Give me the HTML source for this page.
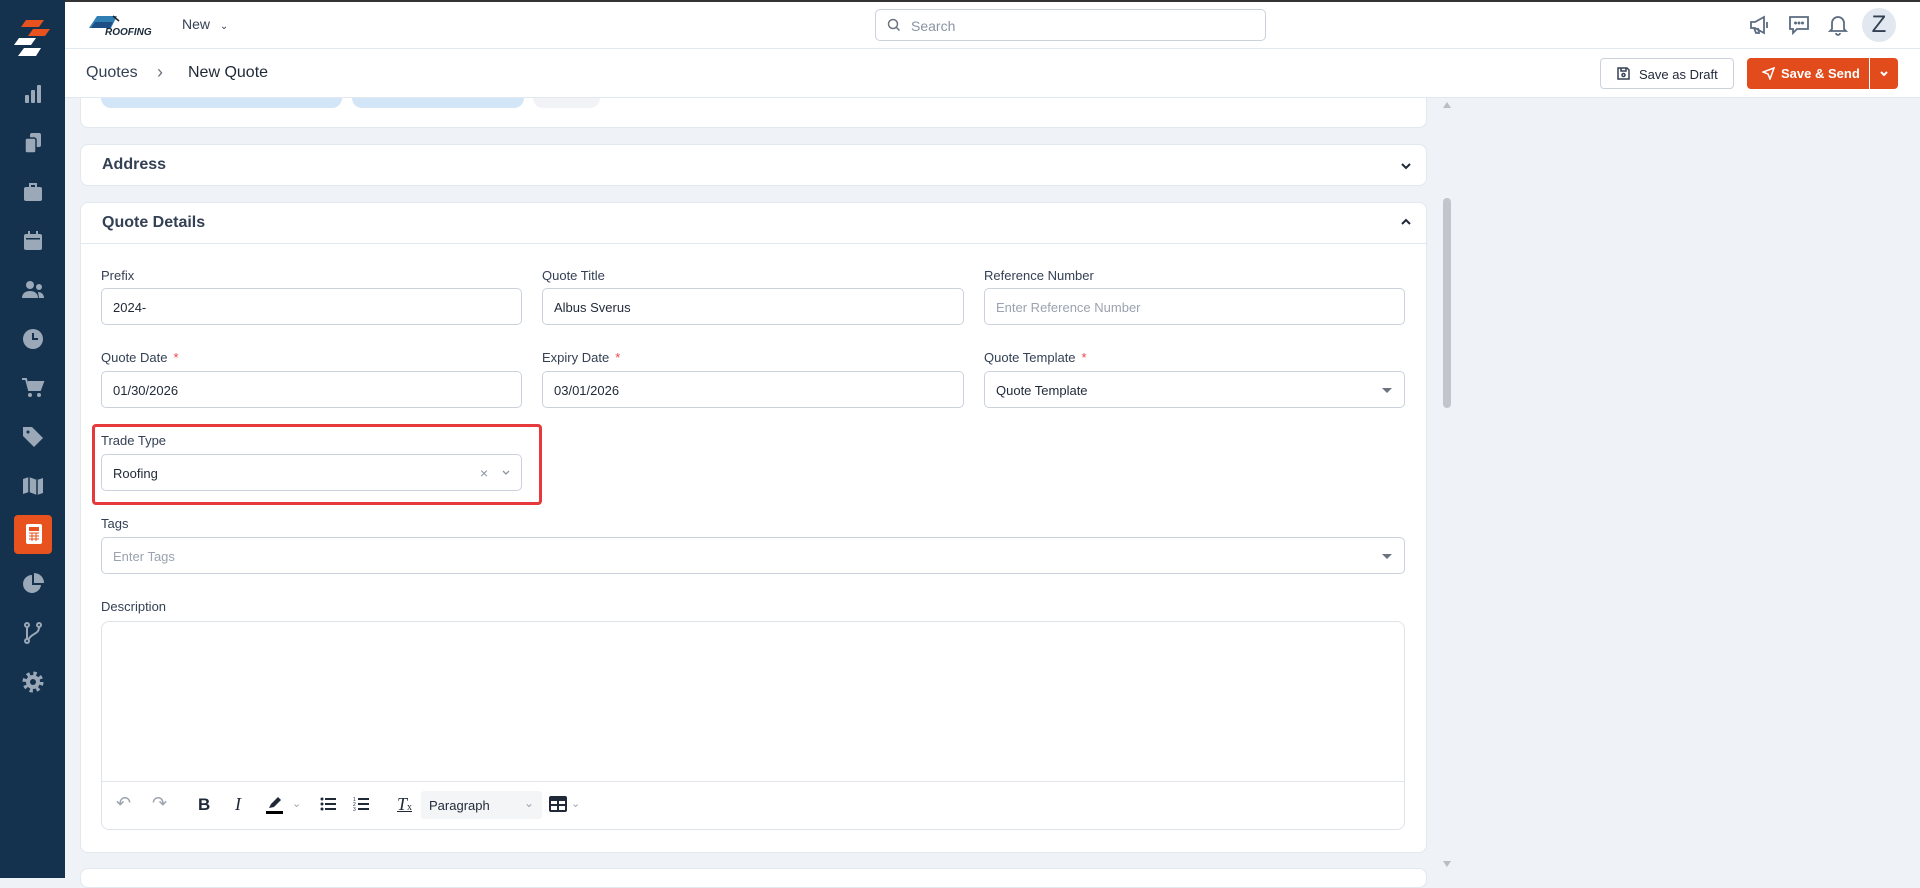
<!DOCTYPE html>
<html><head><meta charset="utf-8"><style>
*{box-sizing:border-box;margin:0;padding:0}
body{width:1920px;height:878px;overflow:hidden;background:#eff2f7;font-family:"Liberation Sans",sans-serif;color:#344054;position:relative}
.abs{position:absolute}
#side{left:0;top:0;width:65px;height:878px;background:#14324d;z-index:5}
#top{left:65px;top:0;width:1855px;height:49px;background:#fff;border-bottom:1px solid #e2e8f0;border-top:2px solid #333;z-index:5}
#bc{left:65px;top:49px;width:1855px;height:49px;background:#fff;border-bottom:1px solid #e2e8f0;z-index:5}
.card{position:absolute;left:80px;width:1347px;background:#fff;border:1px solid #e2e8f0;border-radius:8px}
.lbl{position:absolute;font-size:13px;color:#344054}
.lbl b{color:#ef4444;font-weight:normal;margin-left:6px}
.inp{position:absolute;height:37px;border:1px solid #cbd2dc;border-radius:5px;font-size:13px;padding:11px 11px;color:#1f2937;background:#fff}
.ph{color:#9aa3b0}
.si{position:absolute;left:21px;width:24px;height:24px}
.car{position:absolute;right:12px;top:16px;width:0;height:0;border-left:5px solid transparent;border-right:5px solid transparent;border-top:5px solid #6b7280}
</style></head><body>
<div id="side" class="abs">
<svg class="abs" style="left:14px;top:20px" width="36" height="38" viewBox="0 0 36 38"><path d="M12 0h18l-5 7H7z" fill="#e8521e"/><path d="M19 9h17l-5 7H14z" fill="#e8521e"/><path d="M5 18h17l-5 7H0z" fill="#fff"/><path d="M10 28h17l-5 8H4z" fill="#fff"/></svg>
<svg class="si" style="top:82px" viewBox="0 0 24 24" fill="#9aa8b8"><rect x="4" y="13" width="4" height="8" rx="1"/><rect x="10" y="8" width="4" height="13" rx="1"/><rect x="16" y="3" width="4" height="18" rx="1"/></svg>
<svg class="si" style="top:131px" viewBox="0 0 24 24" fill="#9aa8b8"><rect x="9" y="2" width="11" height="14" rx="2"/><rect x="4" y="7" width="11" height="15" rx="2" stroke="#14324d" stroke-width="1.5"/></svg>
<svg class="si" style="top:180px" viewBox="0 0 24 24" fill="#9aa8b8"><rect x="3" y="7" width="18" height="14" rx="2"/><path d="M9 7V4h6v3" stroke="#9aa8b8" stroke-width="2" fill="none"/></svg>
<svg class="si" style="top:229px" viewBox="0 0 24 24" fill="#9aa8b8"><rect x="3" y="5" width="18" height="16" rx="2"/><rect x="7" y="2" width="2" height="4"/><rect x="15" y="2" width="2" height="4"/><rect x="5" y="9" width="14" height="1.5" fill="#14324d"/></svg>
<svg class="si" style="top:278px" viewBox="0 0 24 24" fill="#9aa8b8"><circle cx="9" cy="7" r="4"/><path d="M1 20c0-5 4-7 8-7s8 2 8 7z"/><circle cx="18" cy="9" r="3"/><path d="M17 14c3 0 6 2 6 6h-5z"/></svg>
<svg class="si" style="top:327px" viewBox="0 0 24 24"><circle cx="12" cy="12" r="10" fill="#9aa8b8"/><path d="M12 6v6h5" stroke="#14324d" stroke-width="2" fill="none"/></svg>
<svg class="si" style="top:376px" viewBox="0 0 24 24" fill="#9aa8b8"><path d="M1 3h4l3 11h11l3-8H7" stroke="#9aa8b8" stroke-width="2" fill="none"/><path d="M7 6h15l-3 8H8z"/><circle cx="9" cy="19" r="2"/><circle cx="18" cy="19" r="2"/></svg>
<svg class="si" style="top:425px" viewBox="0 0 24 24" fill="#9aa8b8"><path d="M2 4V2h9l11 11-9 9L2 11z"/><circle cx="7" cy="7" r="1.5" fill="#14324d"/></svg>
<svg class="si" style="top:474px" viewBox="0 0 24 24" fill="#9aa8b8"><path d="M2 5l6-2 8 3 6-2v15l-6 2-8-3-6 2z"/><path d="M8 3v16M16 6v16" stroke="#14324d" stroke-width="1.5"/></svg>
<div class="abs" style="left:14px;top:515px;width:38px;height:39px;background:#e8521e;border-radius:4px"></div>
<svg class="si" style="top:522px;left:22px" viewBox="0 0 24 24"><rect x="4" y="2" width="16" height="20" rx="2" fill="#fff"/><rect x="7" y="5" width="10" height="4" fill="#e8521e"/><path d="M7 11h10M7 14h10M7 17h10M10 11v8M14 11v8" stroke="#e8521e" stroke-width="1"/></svg>
<svg class="si" style="top:572px" viewBox="0 0 24 24" fill="#9aa8b8"><path d="M11 3a9 9 0 1 0 9 10h-9z"/><path d="M13 1v10h10A10 10 0 0 0 13 1z"/></svg>
<svg class="si" style="top:621px" viewBox="0 0 24 24" fill="none" stroke="#9aa8b8" stroke-width="2"><circle cx="6" cy="4" r="2"/><circle cx="6" cy="20" r="2"/><circle cx="18" cy="4" r="2"/><path d="M6 6v12M18 6c0 8-8 6-10 12"/></svg>
<svg class="si" style="top:670px" viewBox="0 0 24 24"><circle cx="12" cy="12" r="8" fill="none" stroke="#9aa8b8" stroke-width="5" stroke-dasharray="3 3.3"/><circle cx="12" cy="12" r="7" fill="#9aa8b8"/><circle cx="12" cy="12" r="3" fill="#14324d"/></svg>
</div>
<div id="top" class="abs">
<svg class="abs" style="left:22px;top:12px" width="72" height="22" viewBox="0 0 72 22"><path d="M10 2h20l-6 12H2z" fill="#2f7fb5"/><path d="M8 8h18l-3 6H4z" fill="#1e4f84"/><path d="M26 2l6 5" stroke="#222" stroke-width="1.5"/><text x="18" y="21" font-size="10" font-style="italic" font-weight="bold" fill="#1a2a3a" font-family="Liberation Sans">ROOFING</text></svg>
<div class="abs" style="left:117px;top:14px;font-size:14px;color:#344054">New <span style="font-size:10px;margin-left:6px">&#8964;</span></div>
<div class="abs" style="left:810px;top:7px;width:391px;height:32px;border:1px solid #cbd2dc;border-radius:5px;background:#fff">
<svg class="abs" style="left:11px;top:8px" width="14" height="14" viewBox="0 0 14 14" fill="none" stroke="#6b7280" stroke-width="1.5"><circle cx="6" cy="6" r="4.5"/><path d="M9.5 9.5l3 3"/></svg>
<span class="abs" style="left:35px;top:8px;font-size:14px;color:#8a94a3">Search</span></div>
<svg class="abs" style="left:1684px;top:13px" width="22" height="20" viewBox="0 0 22 20" fill="none" stroke="#5b6b80" stroke-width="1.8"><path d="M2 7h4l9-5v16l-9-5H2z"/><path d="M5 13l2 5h3l-1-5"/><path d="M18 7v6"/></svg>
<svg class="abs" style="left:1723px;top:13px" width="22" height="20" viewBox="0 0 22 20" fill="none" stroke="#5b6b80" stroke-width="1.8"><path d="M2 2h18v12H9l-4 4v-4H2z"/><circle cx="7.5" cy="8" r=".6" fill="#5b6b80"/><circle cx="11" cy="8" r=".6" fill="#5b6b80"/><circle cx="14.5" cy="8" r=".6" fill="#5b6b80"/></svg>
<svg class="abs" style="left:1763px;top:12px" width="20" height="22" viewBox="0 0 20 22" fill="none" stroke="#5b6b80" stroke-width="1.8"><path d="M4 15V9a6 6 0 0 1 12 0v6l2 2H2z"/><path d="M8 19a2 2 0 0 0 4 0"/></svg>
<div class="abs" style="left:1797px;top:6px;width:34px;height:34px;border-radius:50%;background:#e2e8f0;font-size:24px;color:#344054;text-align:center;line-height:34px">Z</div>
</div>
<div id="bc" class="abs">
<span class="abs" style="left:21px;top:15px;font-size:16px;color:#344054">Quotes</span>
<span class="abs" style="left:92px;top:13px;font-size:18px;color:#6b7280">&#8250;</span>
<span class="abs" style="left:123px;top:15px;font-size:16px;color:#1f2937">New Quote</span>
<div class="abs" style="left:1535px;top:9px;width:134px;height:31px;border:1px solid #cbd2dc;border-radius:4px;background:#fff;font-size:13px;color:#1f2937;padding:8px 0 0 38px">Save as Draft
<svg class="abs" style="left:16px;top:8px" width="13" height="13" viewBox="0 0 13 13" fill="none" stroke="#344054" stroke-width="1.5"><path d="M1 1h9l2 2v9H1z"/><circle cx="6.5" cy="8" r="1.5"/><path d="M4 1v3h5V1"/></svg></div>
<div class="abs" style="left:1682px;top:9px;width:151px;height:31px;border-radius:4px;background:#e24c1d;font-size:13px;color:#fff;font-weight:bold;padding:8px 0 0 34px">Save &amp; Send
<svg class="abs" style="left:15px;top:9px" width="13" height="13" viewBox="0 0 13 13" fill="none" stroke="#fff" stroke-width="1.5"><path d="M12 1L1 5l5 2 2 5z"/></svg>
<div class="abs" style="left:122px;top:0;width:1px;height:31px;background:#fff"></div>
<svg class="abs" style="left:132px;top:12px" width="10" height="8" viewBox="0 0 10 8" fill="none" stroke="#fff" stroke-width="2"><path d="M2 2l3 3 3-3"/></svg></div>
</div>
<div class="card" style="top:70px;height:58px;border-top:none;border-radius:0 0 8px 8px"></div>
<div class="abs" style="left:101px;top:98px;width:241px;height:10px;background:#d2e6f8;border-radius:0 0 12px 12px"></div>
<div class="abs" style="left:352px;top:98px;width:172px;height:10px;background:#d2e6f8;border-radius:0 0 12px 12px"></div>
<div class="abs" style="left:533px;top:98px;width:67px;height:10px;background:#f1f3f6;border-radius:0 0 12px 12px"></div>
<div class="card" style="top:144px;height:42px"><span class="abs" style="left:21px;top:11px;font-size:16px;font-weight:bold;color:#344054">Address</span>
<svg class="abs" style="right:14px;top:17px" width="12" height="8" viewBox="0 0 12 8" fill="none" stroke="#1f2937" stroke-width="2"><path d="M2 2l4 4 4-4"/></svg></div>
<div class="card" style="top:202px;height:651px">
<div class="abs" style="left:0;top:40px;width:100%;height:1px;background:#e2e8f0"></div>
<span class="abs" style="left:21px;top:11px;font-size:16px;font-weight:bold;color:#344054">Quote Details</span>
<svg class="abs" style="right:14px;top:15px" width="12" height="8" viewBox="0 0 12 8" fill="none" stroke="#1f2937" stroke-width="2"><path d="M2 6l4-4 4 4"/></svg>
</div>
<div class="lbl" style="left:101px;top:268px">Prefix</div>
<div class="inp" style="left:101px;top:288px;width:421px">2024-</div>
<div class="lbl" style="left:542px;top:268px">Quote Title</div>
<div class="inp" style="left:542px;top:288px;width:422px">Albus Sverus</div>
<div class="lbl" style="left:984px;top:268px">Reference Number</div>
<div class="inp ph" style="left:984px;top:288px;width:421px">Enter Reference Number</div>
<div class="lbl" style="left:101px;top:350px">Quote Date<b>*</b></div>
<div class="inp" style="left:101px;top:371px;width:421px">01/30/2026</div>
<div class="lbl" style="left:542px;top:350px">Expiry Date<b>*</b></div>
<div class="inp" style="left:542px;top:371px;width:422px">03/01/2026</div>
<div class="lbl" style="left:984px;top:350px">Quote Template<b>*</b></div>
<div class="inp" style="left:984px;top:371px;width:421px">Quote Template<div class="car"></div></div>
<div class="abs" style="left:92px;top:424px;width:450px;height:81px;border:3px solid #e5393b;border-radius:4px"></div>
<div class="lbl" style="left:101px;top:433px">Trade Type</div>
<div class="inp" style="left:101px;top:454px;width:421px">Roofing
<span class="abs" style="left:378px;top:10px;color:#8a94a3;font-size:14px">×</span>
<svg class="abs" style="left:399px;top:14px" width="10" height="8" viewBox="0 0 10 8" fill="none" stroke="#8a94a3" stroke-width="1.3"><path d="M2 2l3 3 3-3"/></svg></div>
<div class="lbl" style="left:101px;top:516px">Tags</div>
<div class="inp ph" style="left:101px;top:537px;width:1304px">Enter Tags<div class="car"></div></div>
<div class="lbl" style="left:101px;top:599px">Description</div>
<div class="abs" style="left:101px;top:621px;width:1304px;height:209px;border:1px solid #dfe3ea;border-radius:8px;background:#fff">
<div class="abs" style="left:0;top:159px;width:100%;height:1px;background:#e2e6ec"></div>
<div class="abs" style="left:14px;top:171px;font-size:18px;color:#9ca3af">&#8630;</div>
<div class="abs" style="left:50px;top:171px;font-size:18px;color:#9ca3af">&#8631;</div>
<div class="abs" style="left:96px;top:173px;font-size:17px;font-weight:bold;color:#1f2937">B</div>
<div class="abs" style="left:133px;top:172px;font-size:18px;font-style:italic;font-family:'Liberation Serif',serif;color:#1f2937">I</div>
<svg class="abs" style="left:163px;top:173px" width="20" height="20" viewBox="0 0 20 20"><path d="M4 13l2-4 7-7 3 3-7 7z" fill="#1f2937"/><rect x="1" y="16" width="17" height="3" fill="#000"/></svg>
<span class="abs" style="left:190px;top:175px;font-size:11px;color:#9ca3af">&#8964;</span>
<svg class="abs" style="left:218px;top:175px" width="16" height="14" viewBox="0 0 16 14" fill="#1f2937"><circle cx="2" cy="2" r="1.5"/><circle cx="2" cy="7" r="1.5"/><circle cx="2" cy="12" r="1.5"/><rect x="5" y="1" width="11" height="2"/><rect x="5" y="6" width="11" height="2"/><rect x="5" y="11" width="11" height="2"/></svg>
<svg class="abs" style="left:251px;top:174px" width="16" height="16" viewBox="0 0 16 16" fill="#1f2937"><text x="0" y="5" font-size="5">1</text><text x="0" y="10" font-size="5">2</text><text x="0" y="15" font-size="5">3</text><rect x="5" y="2" width="11" height="2"/><rect x="5" y="7" width="11" height="2"/><rect x="5" y="12" width="11" height="2"/></svg>
<div class="abs" style="left:295px;top:172px;font-size:18px;font-style:italic;font-family:'Liberation Serif',serif;color:#1f2937;text-decoration:underline">T<span style="font-size:10px;font-style:normal">x</span></div>
<div class="abs" style="left:319px;top:169px;width:121px;height:28px;background:#f4f5f7;border-radius:3px;font-size:13px;color:#1f2937;padding:7px 8px">Paragraph<span class="abs" style="right:8px;top:5px;font-size:12px;color:#9ca3af">&#8964;</span></div>
<svg class="abs" style="left:447px;top:174px" width="18" height="16" viewBox="0 0 18 16"><rect x="1" y="1" width="16" height="14" rx="1" fill="none" stroke="#1f2937" stroke-width="2"/><rect x="1" y="1" width="16" height="4" fill="#1f2937"/><path d="M9 1v14M1 9h16" stroke="#1f2937" stroke-width="2"/></svg>
<span class="abs" style="left:469px;top:175px;font-size:11px;color:#9ca3af">&#8964;</span>
</div>
<div class="card" style="top:868px;height:20px"></div>
<div class="abs" style="left:1443px;top:102px;width:0;height:0;border-left:4px solid transparent;border-right:4px solid transparent;border-bottom:6px solid #b8bec6"></div>
<div class="abs" style="left:1443px;top:198px;width:8px;height:210px;background:#c2c6cc;border-radius:4px"></div>
<div class="abs" style="left:1443px;top:861px;width:0;height:0;border-left:4px solid transparent;border-right:4px solid transparent;border-top:6px solid #b8bec6"></div>
</body></html>
